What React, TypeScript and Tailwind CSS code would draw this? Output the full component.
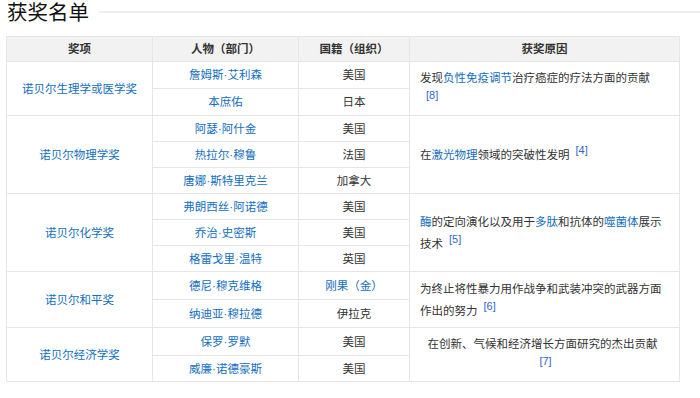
import React from "react";

const link = "text-[#136ec2]";

function Ref({ n }: { n: number }) {
  return (
    <sup className="ml-[6px] -top-[5px] text-[11px] leading-none text-[#3366cc]">
      [{n}]
    </sup>
  );
}

function A({ children }: { children: React.ReactNode }) {
  return <span className={link}>{children}</span>;
}

const td = "border border-[#e6e6e6] text-center align-middle";

export default function App() {
  return (
    <div className="w-[700px] h-[398px] bg-white text-[#333] font-['Liberation_Sans','Noto_Sans_CJK_SC',sans-serif] text-[11.5px] overflow-hidden">
      <div className="flex items-center pl-[7px] h-[26px]">
        <h2 className="text-[20.5px] leading-[26px] text-[#111] shrink-0">获奖名单</h2>
        <div className="ml-[10px] flex-1 h-[2px] bg-[#efefef] -mt-[3px]" />
      </div>
      <table className="ml-[6px] mt-[10px] border-collapse w-[673px] table-fixed leading-[22px]">
        <colgroup>
          <col className="w-[146px]" />
          <col className="w-[146px]" />
          <col className="w-[111px]" />
          <col className="w-[270px]" />
        </colgroup>
        <thead>
          <tr className="h-[25px] bg-[#f2f2f2] font-bold">
            <th className={td}>奖项</th>
            <th className={td}>人物（部门）</th>
            <th className={td}>国籍（组织）</th>
            <th className={td}>获奖原因</th>
          </tr>
        </thead>
        <tbody>
          <tr className="h-[27px]">
            <td className={`${td} ${link}`} rowSpan={2}>诺贝尔生理学或医学奖</td>
            <td className={`${td} ${link}`}>詹姆斯·艾利森</td>
            <td className={td}>美国</td>
            <td className={`${td} text-left pl-[10px] pr-[14px]`} rowSpan={2}>
              发现<A>负性免疫调节</A>治疗癌症的疗法方面的贡献
              <Ref n={8} />
            </td>
          </tr>
          <tr className="h-[27px]">
            <td className={`${td} ${link}`}>本庶佑</td>
            <td className={td}>日本</td>
          </tr>
          <tr className="h-[26px]">
            <td className={`${td} ${link}`} rowSpan={3}>诺贝尔物理学奖</td>
            <td className={`${td} ${link}`}>阿瑟·阿什金</td>
            <td className={td}>美国</td>
            <td className={`${td} text-left pl-[10px] pr-[14px]`} rowSpan={3}>
              在<A>激光物理</A>领域的突破性发明
              <Ref n={4} />
            </td>
          </tr>
          <tr className="h-[26px]">
            <td className={`${td} ${link}`}>热拉尔·穆鲁</td>
            <td className={td}>法国</td>
          </tr>
          <tr className="h-[26px]">
            <td className={`${td} ${link}`}>唐娜·斯特里克兰</td>
            <td className={td}>加拿大</td>
          </tr>
          <tr className="h-[26px]">
            <td className={`${td} ${link}`} rowSpan={3}>诺贝尔化学奖</td>
            <td className={`${td} ${link}`}>弗朗西丝·阿诺德</td>
            <td className={td}>美国</td>
            <td className={`${td} text-left pl-[10px] pr-[14px]`} rowSpan={3}>
              <A>酶</A>的定向演化以及用于<A>多肽</A>和抗体的<A>噬菌体</A>展示技术
              <Ref n={5} />
            </td>
          </tr>
          <tr className="h-[26px]">
            <td className={`${td} ${link}`}>乔治·史密斯</td>
            <td className={td}>美国</td>
          </tr>
          <tr className="h-[26px]">
            <td className={`${td} ${link}`}>格雷戈里·温特</td>
            <td className={td}>英国</td>
          </tr>
          <tr className="h-[28px]">
            <td className={`${td} ${link}`} rowSpan={2}>诺贝尔和平奖</td>
            <td className={`${td} ${link}`}>德尼·穆克维格</td>
            <td className={`${td} ${link}`}>刚果（金）</td>
            <td className={`${td} text-left pl-[10px] pr-[14px]`} rowSpan={2}>
              为终止将性暴力用作战争和武装冲突的武器方面作出的努力
              <Ref n={6} />
            </td>
          </tr>
          <tr className="h-[28px]">
            <td className={`${td} ${link}`}>纳迪亚·穆拉德</td>
            <td className={td}>伊拉克</td>
          </tr>
          <tr className="h-[28px]">
            <td className={`${td} ${link}`} rowSpan={2}>诺贝尔经济学奖</td>
            <td className={`${td} ${link}`}>保罗·罗默</td>
            <td className={td}>美国</td>
            <td className={`${td} pl-[10px] pr-[14px]`} rowSpan={2}>
              在创新、气候和经济增长方面研究的杰出贡献
              <Ref n={7} />
            </td>
          </tr>
          <tr className="h-[26px]">
            <td className={`${td} ${link}`}>威廉·诺德豪斯</td>
            <td className={td}>美国</td>
          </tr>
        </tbody>
      </table>
    </div>
  );
}
